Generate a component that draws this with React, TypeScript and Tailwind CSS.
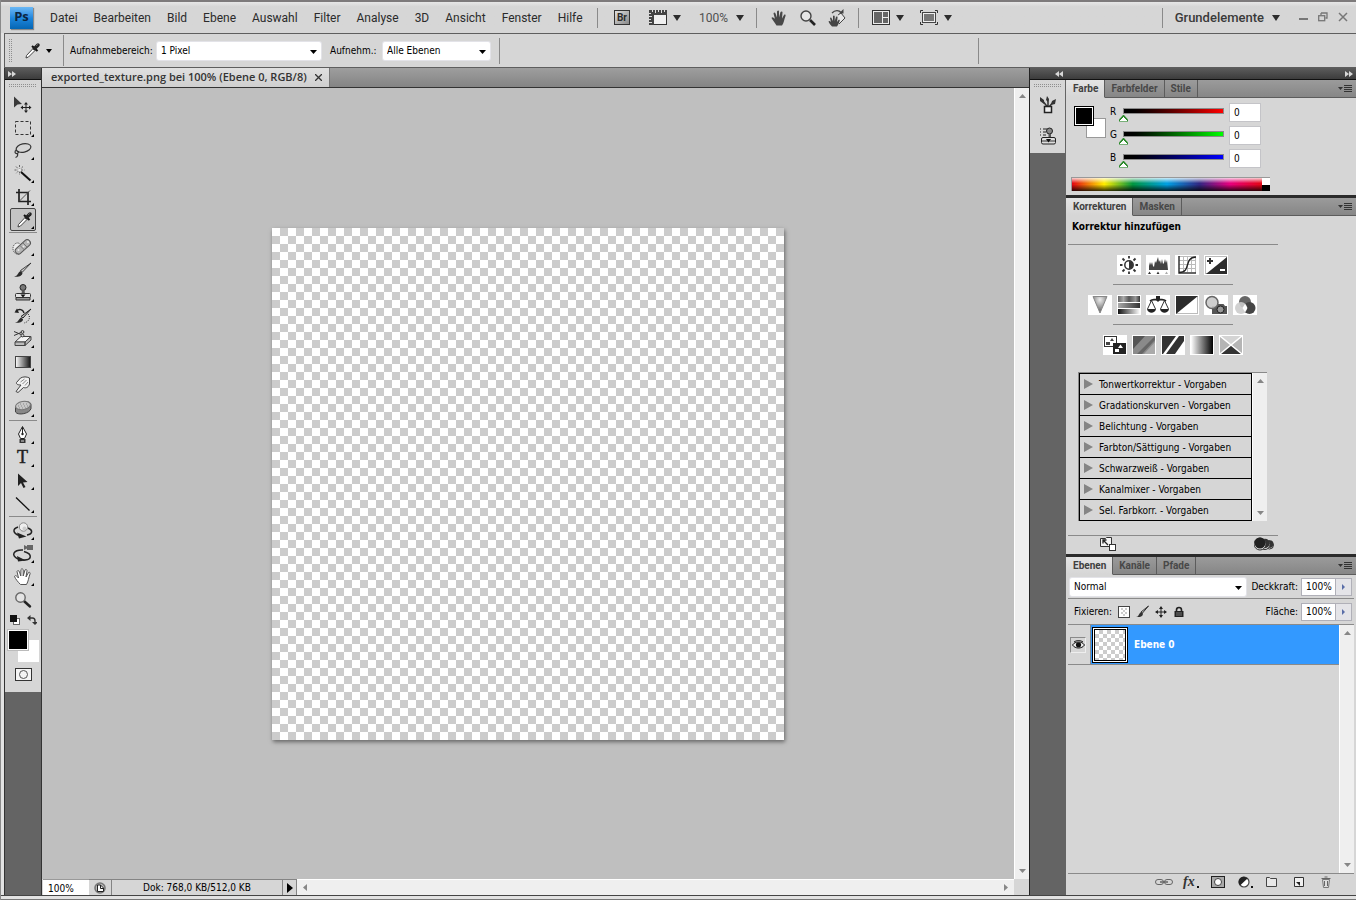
import { useState } from 'react'
import type { ReactNode } from 'react'
import { clsx } from 'clsx'

const MENU = ['Datei', 'Bearbeiten', 'Bild', 'Ebene', 'Auswahl', 'Filter', 'Analyse', '3D', 'Ansicht', 'Fenster', 'Hilfe']

const PRESETS = [
  'Tonwertkorrektur - Vorgaben',
  'Gradationskurven - Vorgaben',
  'Belichtung - Vorgaben',
  'Farbton/Sättigung - Vorgaben',
  'Schwarzweiß - Vorgaben',
  'Kanalmixer - Vorgaben',
  'Sel. Farbkorr. - Vorgaben',
]

const CHANNELS = [
  { label: 'R', bar: 'bg-linear-to-r from-black to-[#f00]' },
  { label: 'G', bar: 'bg-linear-to-r from-black to-[#0f0]' },
  { label: 'B', bar: 'bg-linear-to-r from-black to-[#00f]' },
]

const CHECKER = 'bg-[conic-gradient(#ccc_25%,#fff_0_50%,#ccc_0_75%,#fff_0)]'

/* ---------- small shared pieces ---------- */

function Svg({ w, h, children, className }: { w: number; h: number; children: ReactNode; className?: string }) {
  return (
    <svg width={w} height={h} viewBox={`0 0 ${w} ${h}`} className={clsx('block shrink-0', className)} fill="none" aria-hidden="true">
      {children}
    </svg>
  )
}

function Caret({ className }: { className?: string }) {
  return (
    <Svg w={8} h={6} className={className}>
      <path d="M0 0h8L4 6z" fill="#2d2d2d" />
    </Svg>
  )
}

function Divider() {
  return <span className="h-5 w-px shrink-0 bg-[#8a8a8a]" />
}

function Grip() {
  return (
    <Svg w={28} h={4}>
      {Array.from({ length: 14 }, (_, i) => (
        <path key={i} d={`M${i * 2} 0h1v1h-1zM${i * 2} 2h1v1h-1z`} fill="#8f8f8f" />
      ))}
    </Svg>
  )
}

function DoubleArrow({ left }: { left?: boolean }) {
  return (
    <Svg w={8} h={6}>
      <path d={left ? 'M4 0v6L0 3zM8 0v6L4 3z' : 'M0 0v6l4-3zM4 0v6l4-3z'} fill="#d8d8d8" />
    </Svg>
  )
}

function ScrollBar({ horizontal }: { horizontal?: boolean }) {
  return (
    <div
      className={clsx(
        'flex items-center justify-between bg-[#efefef]',
        horizontal ? 'h-full flex-1 border-t border-white px-1.5' : 'h-full w-[15px] flex-col border-l border-white py-1.5',
      )}
    >
      {horizontal ? (
        <>
          <Svg w={4} h={7}><path d="M4 0v7L0 3.500z" fill="#868686" /></Svg>
          <Svg w={4} h={7}><path d="M0 0v7l4-3.500z" fill="#868686" /></Svg>
        </>
      ) : (
        <>
          <Svg w={7} h={4}><path d="M0 4h7L3.500 0z" fill="#868686" /></Svg>
          <Svg w={7} h={4}><path d="M0 0h7L3.500 4z" fill="#868686" /></Svg>
        </>
      )}
    </div>
  )
}

function SelectBox({ id, value, label, className }: { id: string; value: string; label?: string; className: string }) {
  return (
    <div className={clsx('relative shrink-0', className)}>
      <select
        id={id}
        aria-label={label}
        className="block h-[18px] w-full appearance-none rounded-xs bg-white pl-1 text-[10px] text-black shadow-[0_0_0_1px_#e3e3e8] outline-none"
      >
        <option>{value}</option>
      </select>
      <Svg w={7} h={4} className="pointer-events-none absolute right-1 top-2">
        <path d="M0 0h7L3.500 4z" fill="#000" />
      </Svg>
    </div>
  )
}

/* ---------- toolbox icons, 24x22 each ---------- */

const dropper = (
  <>
    <path d="M7 18l.5-2.500 7-7.500 2 2-7 7z" fill="#fff" stroke="#444" />
    <path d="M13 6l5.500 5" stroke="#111" strokeWidth="2" />
    <path d="M15.500 8.500L19 5" stroke="#222" strokeWidth="3.500" strokeLinecap="round" />
    <path d="M17.500 5.500l1-.8" stroke="#aaa" />
  </>
)

const brush = (
  <>
    <path d="M20 4l-8.500 9-2-1.500z" fill="#ccc" stroke="#333" strokeWidth=".9" />
    <path d="M3 17.500c4 0 3.500-4 6.500-5.500l2 1.700c0 3-4 4.800-8.500 3.800z" fill="#2b2b2b" />
  </>
)

const TOOLS: { name: string; icon: ReactNode; plain?: boolean; active?: boolean; gap?: boolean }[] = [
  {
    name: 'Verschieben',
    plain: true,
    icon: (
      <>
        <path d="M3 2.500v11l3.500-3 4.500-.5z" fill="#3a3a3a" />
        <path d="M15 9v9M10.500 13.500h9" stroke="#222" />
        <path d="M13 10.500l2-2.500 2 2.500zM13 16.500l2 2.500 2-2.500zM12 11.500l-2.500 2 2.500 2zM18 11.500l2.500 2-2.500 2z" fill="#222" />
      </>
    ),
  },
  { name: 'Auswahlrechteck', icon: <rect x="4.500" y="4.500" width="15" height="13" stroke="#333" strokeDasharray="3 2" /> },
  {
    name: 'Lasso',
    icon: (
      <>
        <ellipse cx="12.500" cy="8" rx="7.500" ry="4.200" transform="rotate(-12 12.500 8)" stroke="#333" strokeWidth="1.200" />
        <path d="M5.500 10c-2.500 1-1.500 4 .5 3.500s2-2.500 0-2.500m.5 2.500c.5 2-.5 3.500-2 4" stroke="#333" strokeWidth="1.200" />
      </>
    ),
  },
  {
    name: 'Zauberstab',
    icon: (
      <>
        <path d="M8.500 2v10M3.500 7h10M5 3.500l7 7M12 3.500l-7 7" stroke="#666" strokeDasharray="2 1.200" />
        <path d="M10 9l9.500 8.500" stroke="#111" strokeWidth="2" />
        <circle cx="8.500" cy="7" r="1.500" fill="#eee" />
      </>
    ),
  },
  {
    name: 'Freistellen',
    icon: (
      <>
        <path d="M8 3v12.500h12M5 6.500h12V19" stroke="#222" strokeWidth="1.700" />
        <path d="M8 15.500l11-11" stroke="#444" strokeWidth=".9" />
      </>
    ),
  },
  { name: 'Pipette', active: true, icon: dropper },
  {
    name: 'Bereichsreparatur',
    gap: true,
    icon: (
      <>
        <ellipse cx="6.500" cy="12.500" rx="4.500" ry="5.500" stroke="#333" strokeDasharray="1 1" fill="#eee" />
        <rect x="3" y="7.500" width="18" height="6.500" rx="3.200" transform="rotate(-42 12 11)" fill="#b5b5b5" stroke="#555" />
        <path d="M9 9.500l4.500 4.500M12 7l4.500 4.500" stroke="#777" />
        <circle cx="7.500" cy="14" r="1" fill="#eee" /><circle cx="12.500" cy="10.500" r="1" fill="#eee" /><circle cx="17" cy="6" r="1" fill="#eee" />
      </>
    ),
  },
  { name: 'Pinsel', icon: brush },
  {
    name: 'Kopierstempel',
    icon: (
      <>
        <circle cx="12" cy="5.500" r="3" fill="#777" stroke="#222" />
        <path d="M11 8h2.500l.5 4h-3.500z" fill="#555" />
        <rect x="4.500" y="11.500" width="15" height="4" rx="1" fill="#e5e5e5" stroke="#333" />
        <path d="M5 15.500h14v2.500H5z" fill="#999" stroke="#333" />
        <path d="M9.500 12.500h5L12 15.500z" fill="#111" />
      </>
    ),
  },
  {
    name: 'Protokollpinsel',
    icon: (
      <>
        <path d="M20 4l-8 9-2-1.500z" fill="#bbb" stroke="#222" />
        <path d="M4 17.500c3.500 0 3.500-3.500 6-5l2 1.700c0 2.500-3.500 4.300-8 3.300z" fill="#2b2b2b" />
        <path d="M5 6c3-2.500 7-2 8 2" stroke="#222" strokeWidth="1.400" />
        <path d="M3.500 7.500L8 8 6 3.500z" fill="#222" />
        <path d="M17 9c3 3 1 8-4 9" stroke="#222" strokeDasharray="1 1.300" />
      </>
    ),
  },
  {
    name: 'Radiergummi',
    icon: (
      <>
        <path d="M4 14l6-5.500h10L14 14z" fill="#f4f4f4" stroke="#444" />
        <path d="M4 14h10v3.500H4zM14 14l6-5.500V12l-6 5.500z" fill="#bbb" stroke="#444" />
        <path d="M3 3.500l7 3M3 7.500L10 4.500" stroke="#333" />
        <circle cx="11.500" cy="4" r="1.400" stroke="#333" /><circle cx="11.500" cy="7.500" r="1.400" stroke="#333" fill="#ddd" />
      </>
    ),
  },
  {
    name: 'Verlauf',
    icon: (
      <>
        <defs>
          <linearGradient id="toolGradient"><stop stopColor="#fff" /><stop offset="1" stopColor="#111" /></linearGradient>
        </defs>
        <rect x="4.500" y="5.500" width="15" height="11" fill="url(#toolGradient)" stroke="#444" />
      </>
    ),
  },
  {
    name: 'Wischfinger',
    icon: (
      <>
        <path d="M5 17.500l5-6.500C7.500 11 5 10.500 5.500 8.500l4-4.500c3-1.500 6-1.500 9 0L18.500 10c-1 3-3 4.500-6 3.500L7 18.500z" fill="#f2f2f2" stroke="#444" />
        <path d="M9.500 8l4-3M11.500 10l4-4M14 11.500l3-3.500" stroke="#888" />
      </>
    ),
  },
  {
    name: 'Schwamm',
    icon: (
      <>
        <path d="M4.500 10.500c0-5 15-8.500 15.500-3v4c-1 5-13 7.500-15.500 3.500z" fill="#888" stroke="#444" />
        <ellipse cx="12" cy="8.500" rx="7.500" ry="4" transform="rotate(-11 12 8.500)" fill="#c8c8c8" stroke="#777" />
        <path d="M7 9h10M9 7h9M8 11h7" stroke="#888" strokeDasharray="1 2" />
      </>
    ),
  },
  {
    name: 'Zeichenstift',
    gap: true,
    icon: (
      <>
        <path d="M11.500 2.500L15.500 10l-2 4.500h-4l-2-4.500z" fill="#fff" stroke="#222" />
        <path d="M11.500 3v6" stroke="#222" />
        <circle cx="11.500" cy="10" r="1.200" fill="#222" />
        <path d="M8.500 15h6v4h-6z" fill="#333" />
        <path d="M10 17h3" stroke="#ddd" />
      </>
    ),
  },
  {
    name: 'Text',
    icon: (
      <text x="11.500" y="16" textAnchor="middle" fontSize="18" fill="#222" stroke="#222" strokeWidth=".5" className="font-['Liberation_Serif',serif]">
        T
      </text>
    ),
  },
  { name: 'Pfadauswahl', icon: <path d="M7 3.500v12.500l3-3 2.500 5 2-1-2.500-4.500 4.500-.5z" fill="#222" /> },
  { name: 'Linie', icon: <path d="M5 4.500l13.500 13" stroke="#111" strokeWidth="1.300" /> },
  {
    name: '3D drehen',
    gap: true,
    icon: (
      <>
        <path d="M7 7c-6 2-5 6 1 8.500M17 8c5 2 5 6-1 7" stroke="#222" strokeWidth="1.500" />
        <path d="M6 12.500l9.500 4L8 18.500z" fill="#222" />
        <circle cx="12.500" cy="7" r="4.200" fill="#eee" stroke="#888" />
        <circle cx="13.500" cy="8.500" r="2" fill="#ccc" />
      </>
    ),
  },
  {
    name: '3D-Kamera',
    icon: (
      <>
        <path d="M12 7C3 6.500-1 12 7 16M13 8.500c9 2.500 8 9-1 8.500" stroke="#222" strokeWidth="1.500" />
        <path d="M6 13l9 4.500-8 1z" fill="#222" />
        <path d="M13 2l3 1.500V2h6v5h-6V5.500L13 7z" fill="#666" />
      </>
    ),
  },
  {
    name: 'Hand',
    icon: (
      <path
        d="M9.500 18.500C7 16 4.500 13 3.500 10.500c.5-1.500 2-1 4 1.500L6 5.500C6.500 4 8 4.500 8.500 6l1.300 4L10 3.500c1-1.500 2-.5 2.200.5v6L14 4c1-1 2-.5 2 .8L15 11l2.500-4.500c1.200-.7 2 .3 1.500 1.500-1.500 4-1.500 7-3.500 10.500z"
        fill="#fff"
        stroke="#555"
      />
    ),
  },
  {
    name: 'Zoom',
    plain: true,
    icon: (
      <>
        <path d="M13.500 12.500l5.500 5" stroke="#222" strokeWidth="2.500" strokeLinecap="round" />
        <circle cx="9.500" cy="8.500" r="4.700" fill="#e4e4e4" stroke="#666" strokeWidth="1.400" />
      </>
    ),
  },
]

/* ---------- adjustment icons, 24x20 tiles ---------- */

const ADJUSTMENTS: { name: string; icon: ReactNode }[][] = [
  [
    {
      name: 'Helligkeit/Kontrast',
      icon: (
        <>
          <circle cx="12" cy="10" r="4.200" stroke="#333" strokeWidth="1.500" fill="#fff" />
          <path d="M12 6a4 4 0 010 8z" fill="#333" />
          <path d="M12 1v2.500M12 16.500V19M3 10h2.500M18.500 10H21M5.500 3.500l2 2M16.500 14.500l2 2M18.500 3.500l-2 2M7.500 14.500l-2 2" stroke="#333" strokeWidth="1.800" />
        </>
      ),
    },
    {
      name: 'Tonwertkorrektur',
      icon: (
        <>
          <path d="M3 15v-4l1-4 1 3 1-3 1 4 1 1 1-6 1 2 1-3 1-3 1 5 1-2 1 4 1-5 1 5 1-1 1-4 1 4 1-3 1 10z" fill="#444" />
          <path d="M2 19l1.500-2.500L5 19zM10.500 19l1.500-2.500 1.500 2.500z" fill="#333" />
          <path d="M19 19l1.500-2.500L22 19z" fill="#aaa" />
        </>
      ),
    },
    {
      name: 'Gradationskurven',
      icon: (
        <>
          <path d="M8.500 2v15M12.500 2v15M16.500 2v15M4 5.500h16M4 9.500h16M4 13.500h16M20.500 2v16M4 1.500h17" stroke="#bbb" />
          <path d="M4 1v17h17" stroke="#333" strokeWidth="1.500" />
          <path d="M4 17.500c13 0 4-15 17-15.500" stroke="#222" strokeWidth="1.500" />
        </>
      ),
    },
    {
      name: 'Belichtung',
      icon: (
        <>
          <rect x="1.500" y="1.500" width="21" height="17" stroke="#bbb" />
          <path d="M23 2v17H2z" fill="#2b2b2b" />
          <path d="M3 6h6M6 3v6" stroke="#333" strokeWidth="2" />
          <path d="M16 15h5" stroke="#fff" strokeWidth="2" />
        </>
      ),
    },
  ],
  [
    {
      name: 'Dynamik',
      icon: (
        <>
          <defs>
            <radialGradient id="vibrance" cx=".5" cy=".2" r=".8"><stop stopColor="#eee" /><stop offset="1" stopColor="#555" /></radialGradient>
          </defs>
          <path d="M5 1.500h14L12 18z" fill="url(#vibrance)" stroke="#888" />
        </>
      ),
    },
    {
      name: 'Farbton/Sättigung',
      icon: (
        <>
          <defs>
            <linearGradient id="hueA"><stop stopColor="#666" /><stop offset=".25" stopColor="#aaa" /><stop offset=".5" stopColor="#555" /><stop offset=".8" stopColor="#999" /><stop offset="1" stopColor="#333" /></linearGradient>
            <linearGradient id="hueB"><stop stopColor="#aaa" /><stop offset="1" stopColor="#333" /></linearGradient>
            <linearGradient id="hueC"><stop stopColor="#111" /><stop offset="1" stopColor="#fff" /></linearGradient>
          </defs>
          <path d="M1 1h22v6H1z" fill="url(#hueA)" /><path d="M1 8h22v5H1z" fill="url(#hueB)" /><path d="M1 14h22v5H1z" fill="url(#hueC)" />
        </>
      ),
    },
    {
      name: 'Farbbalance',
      icon: (
        <>
          <path d="M4 6c4-3 5 0 8-2 3 2 4-1 8 2" stroke="#222" strokeWidth="1.700" />
          <path d="M10 1h4v4l-2 2-2-2zM1 14h9c-1 5-8 5-9 0zM14 14h9c-1 5-8 5-9 0z" fill="#222" />
          <path d="M5.500 5.500L1.500 14M5.500 5.500l4 8.500M18.500 5.500l-4 8.500M18.500 5.500l4 8.500" stroke="#333" />
        </>
      ),
    },
    {
      name: 'Schwarzweiß',
      icon: (
        <>
          <rect x="1.500" y="1.500" width="21" height="17" stroke="#bbb" />
          <path d="M1 1h22L1 19z" fill="#2b2b2b" />
        </>
      ),
    },
    {
      name: 'Fotofilter',
      icon: (
        <>
          <path d="M8 11h4l1.500-2h6l1.500 2h2v8H8z" fill="#555" />
          <circle cx="16.500" cy="14.500" r="3.500" fill="#999" stroke="#222" />
          <circle cx="8" cy="7.500" r="6" fill="#c9c9c9" fillOpacity=".9" stroke="#666" strokeWidth="1.500" />
        </>
      ),
    },
    {
      name: 'Kanalmixer',
      icon: (
        <>
          <circle cx="12" cy="7" r="6" fill="#666" />
          <circle cx="16.500" cy="13" r="6" fill="#444" />
          <circle cx="8" cy="13" r="6" fill="#ccc" fillOpacity=".9" />
          <path d="M12 9l2.500 4-2.500 4-2.500-4z" fill="#fff" />
        </>
      ),
    },
  ],
  [
    {
      name: 'Umkehren',
      icon: (
        <>
          <rect x="1.500" y="1.500" width="12" height="10" fill="#fff" stroke="#333" />
          <path d="M3 7h4v3H3zM7 6l2-3 2 3z" fill="#444" />
          <path d="M10 8h13v11H10z" fill="#222" />
          <path d="M12 14h4v3h-4zM15 13l2.500-3.500L20 13z" fill="#fff" />
        </>
      ),
    },
    {
      name: 'Tontrennung',
      icon: (
        <>
          <path d="M1 1h22v18H1z" fill="#8a8a8a" />
          <path d="M1 1h12L1 14z" fill="#555" />
          <path d="M23 1v4L10 19H5z" fill="#666" /><path d="M23 7v12H12z" fill="#aaa" />
        </>
      ),
    },
    {
      name: 'Schwellenwert',
      icon: (
        <>
          <path d="M1 1h22v18H1z" fill="#333" />
          <path d="M15 1h3L5 19H2z" fill="#fff" /><path d="M23 6v13h-9z" fill="#fff" />
        </>
      ),
    },
    {
      name: 'Verlaufsumsetzung',
      icon: (
        <>
          <defs>
            <linearGradient id="gradientMap"><stop stopColor="#fff" /><stop offset="1" stopColor="#000" /></linearGradient>
          </defs>
          <path d="M1 1h22v18H1z" fill="url(#gradientMap)" />
        </>
      ),
    },
    {
      name: 'Selektive Farbkorrektur',
      icon: (
        <>
          <path d="M1 1h22v18H1z" fill="#d4d4d4" />
          <path d="M1 1l11 9L1 19zM23 1l-11 9 11 9z" fill="#b5b5b5" />
          <path d="M1 19l11-9 11 9z" fill="#333" />
          <path d="M1 1l22 18M23 1L1 19" stroke="#fff" strokeWidth="1.600" />
        </>
      ),
    },
  ],
]

/* ---------- top bars ---------- */

function MenuBar() {
  return (
    <header className="flex h-[33px] shrink-0 items-center border-t-2 border-[#7d7a7b] bg-linear-to-b from-[#e6e6e6] to-[#d6d6d6] to-15% pl-[9px] font-[Roboto,sans-serif] text-[12px] text-[#2b2b2b]">
      <div className="flex h-[22px] w-[23px] shrink-0 items-center justify-center bg-linear-to-b from-[#6bb8f5] via-[#1d86dd] to-[#0466b4] pb-0.5 font-['Open_Sans',sans-serif] text-[13px] font-bold text-[#0b2440] shadow-[1px_1px_1px_#8a8a8a]">
        Ps
      </div>
      <nav className="flex w-[564px] shrink-0 items-center gap-4 pl-[17px]">
        {MENU.map((item) => (
          <button key={item} type="button" className="whitespace-nowrap">{item}</button>
        ))}
      </nav>
      <Divider />
      <button type="button" aria-label="Bridge" className="ml-4 flex h-[15px] w-4 items-center justify-center border border-[#333] bg-linear-to-br from-[#e2e2e2] to-[#888] text-[10px] font-bold">
        Br
      </button>
      <button type="button" aria-label="Extras" className="ml-[19px] flex items-center gap-1.5">
        <Svg w={18} h={15}>
          <rect x=".5" y=".5" width="17" height="14" fill="#f0f0f0" stroke="#333" />
          <path d="M0 0h18v5H0zM0 0h5v15H0z" fill="#444" />
          <path d="M3.500 0v2M6.500 0v3M9.500 0v2M12.500 0v3M15.500 0v2M0 3.500h2M0 6.500h3M0 9.500h2M0 12.500h3" stroke="#ddd" />
        </Svg>
        <Caret />
      </button>
      <button type="button" className="ml-[18px] flex items-center gap-2 text-[#505050]">
        100%
        <Caret />
      </button>
      <span className="w-3 shrink-0" />
      <Divider />
      <button type="button" aria-label="Hand" className="ml-3.5">
        <Svg w={16} h={16}>
          <path d="M5.500 15.500C3.500 12 1.500 10 .5 8c.5-1.500 2-.5 3.500 1L2.500 3.500C3 2 4 2.500 4.500 3.500L6 7.500 6 1.500C7 0 8 .5 8 1.500v6L9.500 2c1-1 2-.5 2 .5L11 8.500 13 5c1-1 2 0 1.500 1-1.500 4-1.500 7-3.500 9.500z" fill="#484848" />
        </Svg>
      </button>
      <button type="button" aria-label="Zoom" className="ml-[13px]">
        <Svg w={16} h={16}>
          <path d="M10 10l5 5" stroke="#222" strokeWidth="2.600" />
          <circle cx="6" cy="6" r="5" fill="#e6e6e6" stroke="#444" strokeWidth="1.400" />
        </Svg>
      </button>
      <button type="button" aria-label="Ansichtsdrehung" className="ml-3">
        <Svg w={18} h={18}>
          <path d="M10 6l3-2 4 5-6 6" stroke="#444" fill="#e8e8e8" />
          <path d="M4 4c3-3 7-3 9-.5" stroke="#444" strokeWidth="1.300" />
          <path d="M11 4.500h4.500V0z" fill="#444" />
          <path d="M4 17.500C2 15 1 14 .5 12.500c.5-1 1.500-.5 2.500.5l-1-4c.5-1 1.500-.5 1.700.5L5 12V7c.8-1 1.500-.5 1.700.3V12L8 8c.8-.8 1.600-.3 1.500.6L9 13l1.500-2c1-.7 1.600 0 1.200.8-1 3-1.500 4-2.700 5.700z" fill="#444" />
        </Svg>
      </button>
      <span className="w-3 shrink-0" />
      <Divider />
      <button type="button" aria-label="Dokumente anordnen" className="ml-[13px] flex items-center gap-1.5">
        <Svg w={18} h={15}>
          <rect x=".5" y=".5" width="17" height="14" fill="#eee" stroke="#333" />
          <path d="M2 2h8v11H2zM11 2h5v5h-5zM11 8h5v5h-5z" fill="#666" />
        </Svg>
        <Caret />
      </button>
      <button type="button" aria-label="Bildschirmmodus" className="ml-4 flex items-center gap-1.5">
        <Svg w={18} h={15}>
          <path d="M.5 3V.5H3M15 .5h2.500V3M17.500 12v2.500H15M3 14.500H.5V12" stroke="#333" />
          <rect x="2.500" y="2.500" width="13" height="10" fill="#eee" stroke="#444" />
          <path d="M4 4h10v7H4z" fill="#777" />
        </Svg>
        <Caret />
      </button>
      <div className="ml-auto flex shrink-0 items-center">
        <Divider />
        <button type="button" className="ml-3 flex items-center gap-2 text-[13px] font-medium text-[#3a3a3a]">
          Grundelemente
          <Caret />
        </button>
        <div className="ml-[18px] flex items-center gap-2.5 pb-0.5 pr-2">
          <button type="button" aria-label="Minimieren">
            <Svg w={10} h={10}><path d="M1 7h9" stroke="#777" strokeWidth="2" /></Svg>
          </button>
          <button type="button" aria-label="Wiederherstellen">
            <Svg w={10} h={10}><path d="M3 1h6v5H7.500M3 1v2" stroke="#777" strokeWidth="1.300" /><rect x=".7" y="3.700" width="6" height="5" stroke="#777" strokeWidth="1.300" /></Svg>
          </button>
          <button type="button" aria-label="Schließen">
            <Svg w={10} h={10}><path d="M1 1l8 8M9 1L1 9" stroke="#777" strokeWidth="1.500" /></Svg>
          </button>
        </div>
      </div>
    </header>
  )
}

function OptionsBar() {
  return (
    <div className="ml-[3px] flex h-[35px] shrink-0 items-center border-y border-l border-[#5e5e5e] bg-[#d6d6d6] pl-1 text-black">
      <Svg w={4} h={24}>
        {Array.from({ length: 12 }, (_, i) => (
          <path key={i} d={`M0 ${i * 2}h1v1h-1zM2 ${i * 2}h1v1h-1z`} fill="#8f8f8f" />
        ))}
      </Svg>
      <button type="button" aria-label="Pipette" className="ml-1.5 flex w-11 shrink-0 items-center gap-[3px]">
        <Svg w={24} h={22}>{dropper}</Svg>
        <Svg w={6} h={4}><path d="M0 0h6L3 4z" fill="#000" /></Svg>
      </button>
      <span className="h-[31px] w-px shrink-0 bg-[#8a8a8a]" />
      <label htmlFor="range" className="w-[93px] shrink-0 whitespace-nowrap pl-1.5">Aufnahmebereich:</label>
      <SelectBox id="range" value="1 Pixel" className="w-[164px]" />
      <label htmlFor="sample" className="w-[62px] shrink-0 whitespace-nowrap pl-[9px]">Aufnehm.:</label>
      <SelectBox id="sample" value="Alle Ebenen" className="w-[107px]" />
      <span className="ml-[9px] h-[26px] w-px shrink-0 bg-[#8a8a8a]" />
      <span className="ml-[478px] h-[26px] w-px bg-[#8a8a8a]" />
    </div>
  )
}

/* ---------- toolbox ---------- */

function Toolbox() {
  return (
    <aside className="flex w-[38px] shrink-0 flex-col border-x border-[#333] bg-[#646464]">
      <div className="flex h-3 shrink-0 items-center border-b border-[#111] bg-linear-to-b from-[#5c5c5c] to-[#3c3c3c] pl-[3px]">
        <DoubleArrow />
      </div>
      <div className="flex flex-col items-center bg-[#d6d6d6] pb-2 pt-1">
        <Grip />
        <div className="flex flex-col items-center pt-[5px]">
          {TOOLS.map((tool) => (
            <div key={tool.name} className="flex flex-col items-center">
              {tool.gap && <span className="mb-[2px] mt-px h-px w-7 bg-[#8a8a8a]" />}
              <button
                type="button"
                aria-label={tool.name}
                className={clsx(
                  'flex h-[23px] w-[26px] items-center justify-center',
                  tool.active && 'rounded-xs border border-[#444] bg-[#c4c4c4]',
                )}
              >
                <Svg w={24} h={22}>
                  {tool.icon}
                  {!tool.plain && <path d="M23 17v3h-3z" fill="#000" />}
                </Svg>
              </button>
            </div>
          ))}
        </div>
        <div className="flex w-[27px] items-center justify-between pt-1">
          <Svg w={10} h={10}>
            <rect x="3.500" y="3.500" width="6" height="6" fill="#fff" stroke="#666" />
            <path d="M0 0h7v7H0z" fill="#111" />
          </Svg>
          <Svg w={10} h={10}>
            <path d="M2 3h3.500q2.500 0 2.500 3v2" stroke="#333" strokeWidth="1.400" />
            <path d="M0 3l3.500-3v6zM8 10L5 7h6z" fill="#333" />
          </Svg>
        </div>
        <div className="mt-[5px] grid h-8 w-[31px] grid-cols-[20px_11px] grid-rows-[20px_12px]">
          <button type="button" aria-label="Vordergrundfarbe" className="z-10 col-start-1 row-start-1 border border-white bg-black outline outline-[#bbb]" />
          <button type="button" aria-label="Hintergrundfarbe" className="col-span-2 col-start-1 row-span-2 row-start-1 ml-2.5 mt-2.5 bg-white" />
        </div>
        <button type="button" aria-label="Maskierungsmodus" className="mt-1.5">
          <Svg w={17} h={13}>
            <rect x=".5" y=".5" width="16" height="12" fill="#f4f4f4" stroke="#333" />
            <circle cx="8.500" cy="6.500" r="4" stroke="#555" />
          </Svg>
        </button>
        <span className="h-[3px]" />
      </div>
    </aside>
  )
}

/* ---------- document ---------- */

function DocumentWindow() {
  return (
    <main className="flex min-w-0 flex-1 flex-col bg-[#bfbfbf]">
      <div className="flex h-5 shrink-0 border-b border-[#333] bg-linear-to-b from-[#9e9e9e] to-[#848484]">
        <div className="flex items-center gap-2 border-r border-[#777] bg-linear-to-b from-[#e0e0e0] to-[#cfcfcf] pl-[9px] pr-[7px] font-['Open_Sans',sans-serif] text-[11px] font-semibold text-[#333]">
          <span className="whitespace-nowrap">exported_texture.png bei 100% (Ebene 0, RGB/8)</span>
          <button type="button" aria-label="Dokument schließen">
            <Svg w={7} h={7}><path d="M0 0l7 7M7 0L0 7" stroke="#333" strokeWidth="1.300" /></Svg>
          </button>
        </div>
      </div>
      <div className="flex min-h-0 flex-1">
        <div className="flex flex-1 items-center justify-center">
          <div className={clsx('size-[512px] bg-[length:16px_16px] shadow-[1px_2px_4px_#666]', CHECKER)} />
        </div>
        <ScrollBar />
      </div>
      <footer className="flex h-4 shrink-0 bg-[#d6d6d6]">
        <input aria-label="Zoomstufe" defaultValue="100%" className="ml-px h-full w-[46px] border-t border-[#999] bg-white pl-[5px] pt-px outline-none" />
        <button type="button" aria-label="Dateistatus" className="flex w-[23px] items-center justify-center border-r border-t border-[#848484]">
          <Svg w={12} h={12}>
            <circle cx="6" cy="6" r="5" stroke="#777" strokeWidth="1.600" fill="#bbb" />
            <path d="M3.500 3h3l3 3v3.500h-6z" fill="#fff" stroke="#222" />
            <path d="M6.500 3v3.500h3" stroke="#222" />
          </Svg>
        </button>
        <div className="flex w-[171px] items-center justify-center border-r border-t border-[#848484]">Dok: 768,0 KB/512,0 KB</div>
        <button type="button" aria-label="Statusmenü" className="flex w-3.5 items-center justify-center border-r border-t border-[#848484]">
          <Svg w={6} h={10}><path d="M0 0l6 5-6 5z" fill="#000" /></Svg>
        </button>
        <ScrollBar horizontal />
        <span className="w-[15px]" />
      </footer>
    </main>
  )
}

/* ---------- dock ---------- */

function PanelTabs({ tabs }: { tabs: string[] }) {
  return (
    <div className="flex h-[18px] shrink-0 items-stretch bg-linear-to-b from-[#9b9b9b] to-[#858585] font-[Roboto,sans-serif] text-[10px] font-bold">
      {tabs.map((tab, i) => (
        <button
          key={tab}
          type="button"
          className={clsx(
            'whitespace-nowrap border-b border-r border-[#5c5c5c] px-1.5',
            i === 0 ? 'border-b-[#d6d6d6] bg-linear-to-b from-[#e4e4e4] to-[#d6d6d6] pl-[7px] text-[#404040]' : 'text-[#484848]',
          )}
        >
          {tab}
        </button>
      ))}
      <button type="button" aria-label="Bedienfeldmenü" className="flex flex-1 items-center justify-end border-b border-[#5c5c5c] pr-1">
        <Svg w={14} h={7}>
          <path d="M0 2h5L2.500 5z" fill="#333" />
          <path d="M6 .5h8M6 2.500h8M6 4.500h8M6 6.500h8" stroke="#333" />
        </Svg>
      </button>
    </div>
  )
}

function ChannelSlider({ label, bar }: { label: string; bar: string }) {
  const [value, setValue] = useState(0)
  const id = `channel-${label}`

  return (
    <div className="flex h-[23px] items-start">
      <label htmlFor={id} className="w-[13px] leading-3">{label}</label>
      <div className="w-[101px] pt-0.5">
        <div className={clsx('h-1.5 border border-[#8a8a8a]', bar)} />
        <input
          id={id}
          type="range"
          min={0}
          max={255}
          value={value}
          onChange={(e) => setValue(Number(e.target.value))}
          className="-ml-1 block h-2 w-[109px] appearance-none bg-transparent outline-none [&::-webkit-slider-thumb]:h-[7px] [&::-webkit-slider-thumb]:w-[9px] [&::-webkit-slider-thumb]:appearance-none [&::-webkit-slider-thumb]:border-b [&::-webkit-slider-thumb]:border-[#1c8a1c] [&::-webkit-slider-thumb]:bg-[conic-gradient(from_136deg_at_50%_2px,#fff_88deg,#2a8a2a_0)] [&::-webkit-slider-thumb]:[clip-path:polygon(50%_0,100%_70%,100%_100%,0_100%,0_70%)]"
        />
      </div>
      <input
        aria-label={`${label}-Wert`}
        value={value}
        onChange={(e) => setValue(Number(e.target.value) || 0)}
        className="-mt-0.5 ml-1.5 h-[17px] w-[30px] bg-white pl-1 shadow-[0_0_0_1px_#c4c4c8] outline-none"
      />
    </div>
  )
}

function ColorPanel() {
  return (
    <section className="flex flex-col">
      <PanelTabs tabs={['Farbe', 'Farbfelder', 'Stile']} />
      <div className="h-[97px] pl-[5px]">
        <div className="flex pl-[3px] pt-2">
          <div className="grid h-8 w-9 shrink-0 grid-cols-[20px_12px] grid-rows-[20px_12px]">
            <button type="button" aria-label="Vordergrund" className="z-10 col-start-1 row-start-1 border-2 border-black bg-black outline-1 -outline-offset-2 outline-white" />
            <button type="button" aria-label="Hintergrund" className="col-span-2 col-start-1 row-span-2 row-start-1 ml-3 mt-3 border border-[#999] bg-white" />
          </div>
          <div>
            {CHANNELS.map((c) => <ChannelSlider key={c.label} label={c.label} bar={c.bar} />)}
          </div>
        </div>
        <div className="mt-0.5 flex h-3.5 w-[199px] border-l border-t border-[#999]">
          <div className="flex-1 bg-[linear-gradient(to_bottom,#fffc,#fff0_40%,#0000_50%,#000c),linear-gradient(to_right,#e30613,#ffed00_17%,#009640_32%,#009fe3_50%,#312783_67%,#e6007e_83%,#e30613)]" />
          <div className="w-2 bg-linear-to-b from-white from-50% to-black to-50%" />
        </div>
      </div>
    </section>
  )
}

function AdjustmentsPanel() {
  return (
    <section className="flex flex-col border-t-3 border-[#2b2b2b]">
      <PanelTabs tabs={['Korrekturen', 'Masken']} />
      <div className="flex h-[338px] w-[212px] flex-col items-center pl-0.5">
        <h2 className="h-[29px] w-full shrink-0 border-b border-[#8a8a8a] pl-1 pt-[3px] font-bold">Korrektur hinzufügen</h2>
        {ADJUSTMENTS.map((row, i) => (
          <div key={i} className="flex w-[210px] flex-col items-center pr-px">
            {i > 0 && <span className="h-px w-[120px] bg-[#8a8a8a]" />}
            <div className="flex h-[39px] items-center gap-[5px]">
              {row.map((a) => (
                <button key={a.name} type="button" aria-label={a.name} className="bg-white">
                  <Svg w={24} h={20}>{a.icon}</Svg>
                </button>
              ))}
            </div>
          </div>
        ))}
        <div className="mr-[11px] mt-2 flex w-[189px] self-end border-l border-t border-[#8a8a8a]">
          <ul className="w-[173px] border-x border-b border-black">
            {PRESETS.map((p) => (
              <li key={p} className="h-[21px] border-t border-black">
                <button type="button" className="flex h-full items-center gap-1.5 whitespace-nowrap pl-1">
                  <Svg w={9} h={10}><path d="M0 0l9 5-9 5z" fill="#858585" /></Svg>
                  {p}
                </button>
              </li>
            ))}
          </ul>
          <ScrollBar />
        </div>
        <div className="mt-3.5 flex w-full items-center justify-between border-t border-[#8a8a8a] pl-8 pr-1 pt-px">
          <button type="button" aria-label="Erweiterte Ansicht">
            <Svg w={16} h={14}>
              <path d="M.5 1.500h5l1-1h5v9H.5z" fill="#f4f4f4" stroke="#333" />
              <path d="M3 3l5 5M3 6.500V3h3.500" stroke="#222" strokeWidth="1.300" />
              <rect x="9.500" y="7.500" width="6" height="6" fill="#fff" stroke="#333" />
            </Svg>
          </button>
          <button type="button" aria-label="Auf alle Ebenen anwenden">
            <Svg w={20} h={14}>
              <circle cx="15.500" cy="8" r="4" fill="#ddd" stroke="#333" />
              <circle cx="15.500" cy="7" r="3.800" fill="#333" />
              <circle cx="11" cy="7.500" r="5" fill="#eee" stroke="#333" />
              <circle cx="11" cy="6.500" r="4.700" fill="#333" />
              <circle cx="6" cy="7" r="6" fill="#eee" stroke="#333" />
              <circle cx="6" cy="6" r="5.500" fill="#222" />
            </Svg>
          </button>
        </div>
      </div>
    </section>
  )
}

function PercentField({ id, label }: { id: string; label: string }) {
  return (
    <div className="ml-auto flex items-center">
      <label htmlFor={id} className="pr-[3px]">{label}</label>
      <input id={id} defaultValue="100%" className="h-[18px] w-[35px] border border-[#b0b0b8] bg-white pl-1 outline-none" />
      <button type="button" aria-label={`${label} Regler`} className="flex h-[18px] w-4 items-center justify-center border border-l-0 border-[#b0b0b8] bg-[#e4e4e8]">
        <Svg w={3} h={6}><path d="M0 0l3 3-3 3z" fill="#5a6ea8" /></Svg>
      </button>
    </div>
  )
}

const FOOTER_ICONS: { name: string; icon: ReactNode }[] = [
  {
    name: 'Ebenen verbinden',
    icon: (
      <>
        <rect x="1.500" y="4.500" width="8" height="5" rx="2.500" stroke="#666" />
        <rect x="10.500" y="4.500" width="8" height="5" rx="2.500" stroke="#666" />
        <path d="M6 7h8" stroke="#666" strokeWidth="1.500" />
      </>
    ),
  },
  {
    name: 'Ebenenstil',
    icon: (
      <>
        <text x="2" y="11" fontSize="14" fontStyle="italic" fontWeight="bold" fill="#333" className="font-['Liberation_Serif',serif]">fx</text>
        <path d="M16 11h2v2h-2z" fill="#111" />
      </>
    ),
  },
  {
    name: 'Ebenenmaske',
    icon: (
      <>
        <rect x="3.500" y="1.500" width="13" height="11" fill="#aaa" stroke="#222" />
        <circle cx="10" cy="7" r="3.500" fill="#fff" stroke="#444" />
      </>
    ),
  },
  {
    name: 'Füll- oder Einstellungsebene',
    icon: (
      <>
        <circle cx="9" cy="7" r="5" fill="#fff" stroke="#444" strokeWidth="1.200" />
        <path d="M5 10.500A5 5 0 0112.500 3.500z" fill="#222" />
        <path d="M16 11h2v2h-2z" fill="#111" />
      </>
    ),
  },
  { name: 'Neue Gruppe', icon: <path d="M4.500 11.500v-9h3l1 1h6v8z" fill="#e8e8e8" stroke="#444" /> },
  {
    name: 'Neue Ebene',
    icon: (
      <>
        <path d="M5.500 2.500h9v9h-9z" fill="#f0f0f0" stroke="#333" />
        <path d="M7 7h4v4l-1.500-1.500z" fill="#222" />
      </>
    ),
  },
  {
    name: 'Löschen',
    icon: (
      <>
        <path d="M6.500 4.500h7l-1 8h-5z" fill="#ddd" stroke="#777" />
        <path d="M5.500 3.500h9M8.500 2h3M8.500 6v5M11.500 6v5" stroke="#666" />
      </>
    ),
  },
]

function LayersPanel() {
  return (
    <section className="flex min-h-0 flex-1 flex-col border-t-3 border-[#2b2b2b]">
      <PanelTabs tabs={['Ebenen', 'Kanäle', 'Pfade']} />
      <div className="flex min-h-0 flex-1 flex-col px-0.5">
        <div className="flex h-6 shrink-0 items-center border-b border-[#8a8a8a] px-0.5">
          <SelectBox id="blend" value="Normal" label="Füllmethode" className="w-44" />
          <PercentField id="opacity" label="Deckkraft:" />
        </div>
        <div className="flex h-[26px] shrink-0 items-center gap-1.5 border-b border-[#8a8a8a] pl-1.5 pr-0.5">
          <span>Fixieren:</span>
          <button type="button" aria-label="Transparente Pixel fixieren">
            <Svg w={12} h={12}>
              <rect x=".5" y=".5" width="11" height="11" fill="#fff" stroke="#444" />
              <path d="M3 2h2v2H3zM7 2h2v2H7zM5 4h2v2H5zM3 6h2v2H3zM7 6h2v2H7zM5 8h2v2H5z" fill="#ccc" />
            </Svg>
          </button>
          <button type="button" aria-label="Bildpixel fixieren">
            <Svg w={13} h={13}>
              <path d="M12.500 1L6.500 8l-1.500-1z" fill="#ccc" stroke="#333" />
              <path d="M0 12c3 0 2.500-3.500 5-5l2 1.500c0 3-3 4-7 3.500z" fill="#333" />
            </Svg>
          </button>
          <button type="button" aria-label="Position fixieren">
            <Svg w={12} h={12}>
              <path d="M6 1v10M1 6h10" stroke="#222" />
              <path d="M4 3l2-3 2 3zM4 9l2 3 2-3zM3 4L0 6l3 2zM9 4l3 2-3 2z" fill="#222" />
            </Svg>
          </button>
          <button type="button" aria-label="Alles fixieren">
            <Svg w={12} h={12}>
              <path d="M3.500 6V4a2.500 2.500 0 015 0v2" stroke="#222" strokeWidth="1.600" />
              <path d="M1.500 5h9v6h-9z" fill="#222" />
              <path d="M3 7h6M3 9h6" stroke="#777" />
            </Svg>
          </button>
          <PercentField id="fill" label="Fläche:" />
        </div>
        <div className="flex min-h-0 flex-1 border-b border-[#8a8a8a]">
          <div className="flex-1">
            <div className="flex h-10 border-b border-[#8a8a8a]">
              <div className="flex w-[23px] items-center border-r border-[#8a8a8a] pl-0.5">
                <button type="button" aria-label="Sichtbarkeit" className="flex size-4 items-center justify-center border border-[#8a8a8a] border-b-[#eee] border-r-[#eee]">
                  <Svg w={13} h={11}>
                    <path d="M.5 6C3 2 10 2 12.500 6 10 10 3 10 .5 6z" fill="#eee" stroke="#111" />
                    <circle cx="6.500" cy="5.800" r="2.600" fill="#111" />
                    <path d="M2 3c3-2 6-2 9 0" stroke="#111" />
                  </Svg>
                </button>
              </div>
              <button type="button" className="flex flex-1 items-center gap-1.5 bg-[#3399ff] pl-px font-bold text-white">
                <span className="border border-black bg-white p-px">
                  <span className={clsx('block size-8 border border-black bg-[length:8px_8px]', CHECKER)} />
                </span>
                Ebene 0
              </button>
            </div>
          </div>
          <ScrollBar />
        </div>
        <div className="flex h-[21px] shrink-0 items-start justify-end gap-[7px] pr-[18px] pt-px">
          {FOOTER_ICONS.map((f) => (
            <button key={f.name} type="button" aria-label={f.name}>
              <Svg w={20} h={14}>{f.icon}</Svg>
            </button>
          ))}
        </div>
      </div>
    </section>
  )
}

function Dock() {
  return (
    <aside className="flex w-[327px] shrink-0 flex-col border-l border-[#222]">
      <div className="flex h-3 shrink-0 items-center justify-between border-b border-[#111] bg-linear-to-b from-[#5c5c5c] to-[#3c3c3c] pl-[25px] pr-[3px]">
        <DoubleArrow left />
        <DoubleArrow />
      </div>
      <div className="flex min-h-0 flex-1 bg-[#646464]">
        <div className="w-9 shrink-0">
          <div className="mr-px flex h-[73px] flex-col items-center bg-[#d6d6d6] pt-1">
            <Grip />
            <button type="button" aria-label="Pinsel" className="mt-2">
              <Svg w={18} h={18}>
                <path d="M8.500 11L3 4M9 11V3M10 11l5-6" stroke="#333" strokeWidth="1.500" />
                <path d="M1 1l4 3v4L1 5zM8 0l2 3-1 3-2-2zM17 3l-1 5-4 1 1-4z" fill="#333" />
                <rect x="5.500" y="10.500" width="7" height="6" fill="#eee" stroke="#222" strokeWidth="1.500" />
              </Svg>
            </button>
            <button type="button" aria-label="Kopierquelle" className="mt-[13px]">
              <Svg w={18} h={18}>
                <path d="M1 2h1M4 2h4M1 5h1M4 5h3M1 8h1M4 8h3" stroke="#222" />
                <circle cx="10.500" cy="4" r="3" fill="#888" stroke="#222" />
                <path d="M9.500 7h2.500v3H9.500z" fill="#555" />
                <rect x="2.500" y="10.500" width="14" height="6.500" rx="1.500" fill="#ddd" stroke="#222" />
                <path d="M3 14h13" stroke="#333" /><path d="M7 12h5l-2.500 3.500z" fill="#111" />
              </Svg>
            </button>
          </div>
        </div>
        <div className="flex min-w-0 flex-1 flex-col bg-[#d6d6d6]">
          <ColorPanel />
          <AdjustmentsPanel />
          <LayersPanel />
        </div>
      </div>
    </aside>
  )
}

export default function App() {
  return (
    <div className="flex h-screen min-h-[820px] flex-col overflow-hidden border-l border-[#8a8a8a] bg-[#e2e2e2] font-['DejaVu_Sans_Condensed','DejaVu_Sans',sans-serif] text-[10px] text-black">
      <MenuBar />
      <OptionsBar />
      <div className="ml-[3px] flex min-h-0 flex-1">
        <Toolbox />
        <DocumentWindow />
        <Dock />
      </div>
      <div className="h-[5px] shrink-0 border-b border-t border-b-[#777] border-t-[#444] bg-[#e2e2e2]" />
    </div>
  )
}
